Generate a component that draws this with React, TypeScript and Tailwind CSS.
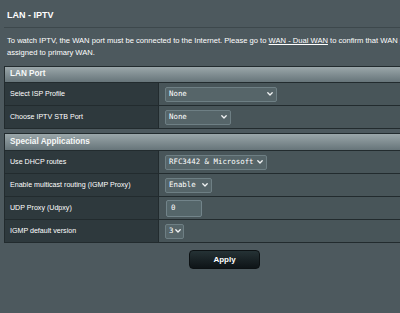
import React from 'react';

const Chevron: React.FC = () => (
  <svg width="6" height="4" viewBox="0 0 6 4" className="shrink-0">
    <path d="M0.8 0.8 L3 3 L5.2 0.8" fill="none" stroke="#f2f4f5" strokeWidth="1.3" strokeLinecap="round" strokeLinejoin="round" />
  </svg>
);

const Select: React.FC<{ value: string; width: string }> = ({ value, width }) => (
  <div
    className={`${width} h-[15px] flex items-center justify-between gap-[2px] pl-[3px] pr-[3px] rounded-[2px] border border-[#6e7f84] bg-[#566569] text-[7.4px] text-white`}
    style={{ fontFamily: '"DejaVu Sans Mono", "Liberation Mono", monospace' }}
  >
    <span className="leading-none whitespace-pre">{value}</span>
    <Chevron />
  </div>
);

const Row: React.FC<{ label: string; children: React.ReactNode }> = ({ label, children }) => (
  <div className="flex h-[23px] border-t border-[#222b2e]">
    <div className="w-[153px] shrink-0 flex items-center pl-[5px] bg-[#2e393d] text-[7.1px] text-white">
      {label}
    </div>
    <div className="flex-1 flex items-center pl-[6px] border-l border-[#222b2e] bg-[#485559]">
      {children}
    </div>
  </div>
);

const Section: React.FC<{ title: string; headerH: string; children: React.ReactNode }> = ({ title, headerH, children }) => (
  <div className="border border-[#222b2e]">
    <div className={`${headerH} flex items-center pl-[5px] bg-gradient-to-b from-[#9ba7aa] to-[#67757a] text-[8.2px] font-bold text-[#f6f8f8]`}>
      {title}
    </div>
    {children}
  </div>
);

export default function App() {
  return (
    <div
      className="w-[400px] h-[313px] overflow-hidden bg-[#4d595e] text-white"
      style={{ fontFamily: '"Liberation Sans", Arial, sans-serif' }}
    >
      <div className="w-[441px] ml-[4px]">
        <div className="pl-[3px] pt-[10px] pb-[6px] text-[9px] leading-[11px] font-bold border-b border-[#3d484c]">
          LAN - IPTV
        </div>
        <p className="mt-[7px] pl-[3px] w-[438px] text-[7.6px] leading-[12px] text-white">
          To watch IPTV, the WAN port must be connected to the Internet. Please go to{' '}
          <span className="underline">WAN - Dual WAN</span> to confirm that WAN port is assigned to primary WAN.
        </p>

        <div className="mt-[7px]">
          <Section title="LAN Port" headerH="h-[15px]">
            <Row label="Select ISP Profile">
              <Select value="None" width="w-[112px]" />
            </Row>
            <Row label="Choose IPTV STB Port">
              <Select value="None" width="w-[66px]" />
            </Row>
          </Section>
        </div>

        <div className="mt-[4px]">
          <Section title="Special Applications" headerH="h-[16px]">
            <Row label="Use DHCP routes">
              <Select value="RFC3442 & Microsoft" width="w-[102px]" />
            </Row>
            <Row label="Enable multicast routing (IGMP Proxy)">
              <Select value="Enable" width="w-[47px]" />
            </Row>
            <Row label="UDP Proxy (Udpxy)">
              <div
                className="ml-[1px] w-[36px] h-[17px] flex items-center pl-[4px] rounded-[2px] border border-[#72848a] bg-[#55666a] text-[7.4px] text-white"
                style={{ fontFamily: '"DejaVu Sans Mono", "Liberation Mono", monospace' }}
              >
                0
              </div>
            </Row>
            <Row label="IGMP default version">
              <div
                className="w-[19px] h-[15px] flex items-center gap-[2px] pl-[3px] rounded-[2px] border border-[#6e7f84] bg-[#566569] text-[7.4px] text-white"
                style={{ fontFamily: '"DejaVu Sans Mono", "Liberation Mono", monospace' }}
              >
                <span className="leading-none">3</span>
                <Chevron />
              </div>
            </Row>
          </Section>
        </div>

        <div className="flex justify-center mt-[7px]">
          <button className="w-[71px] h-[19px] rounded-[4px] border border-[#0c1113] bg-gradient-to-b from-[#253235] to-[#0e1417] text-[8px] font-bold text-white">
            Apply
          </button>
        </div>
      </div>
    </div>
  );
}
